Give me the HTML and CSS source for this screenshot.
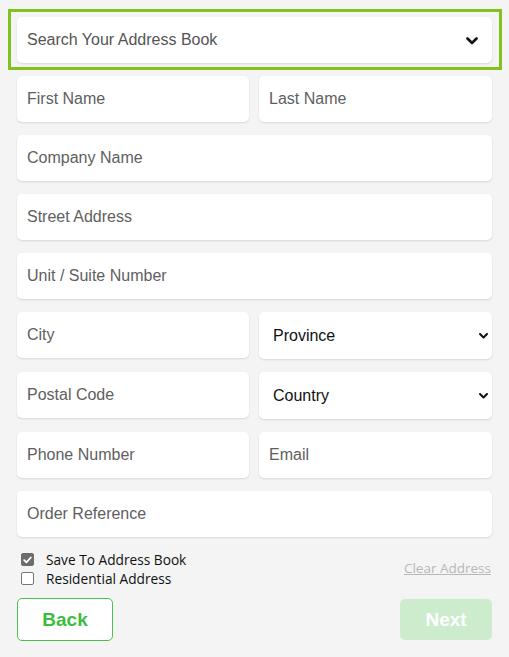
FILE: index.html
```html
<!DOCTYPE html>
<html>
<head>
<meta charset="utf-8">
<link rel="stylesheet" href="styles.css">
</head>
<body>
<div class="page">
  <div class="search-wrap">
    <div class="search-box">
      <span class="search-text">Search Your Address Book</span>
      <svg class="search-chev" width="12" height="8" viewBox="0 0 12 8"><path d="M1.5 1.5 L6 6 L10.5 1.5" fill="none" stroke="#111" stroke-width="2.6" stroke-linecap="round" stroke-linejoin="round"/></svg>
    </div>
  </div>
  <form class="form">
    <div class="row two">
      <input class="field" placeholder="First Name">
      <input class="field" placeholder="Last Name">
    </div>
    <div class="row"><input class="field" placeholder="Company Name"></div>
    <div class="row"><input class="field" placeholder="Street Address"></div>
    <div class="row"><input class="field" placeholder="Unit / Suite Number"></div>
    <div class="row two">
      <input class="field" placeholder="City">
      <div class="select-wrap">
        <select class="select"><option>Province</option></select>
        <svg class="select-chev" width="9" height="6" viewBox="0 0 9 6"><path d="M1 1 L4.5 4.5 L8 1" fill="none" stroke="#111" stroke-width="2" stroke-linecap="round" stroke-linejoin="round"/></svg>
      </div>
    </div>
    <div class="row two">
      <input class="field" placeholder="Postal Code">
      <div class="select-wrap">
        <select class="select"><option>Country</option></select>
        <svg class="select-chev" width="9" height="6" viewBox="0 0 9 6"><path d="M1 1 L4.5 4.5 L8 1" fill="none" stroke="#111" stroke-width="2" stroke-linecap="round" stroke-linejoin="round"/></svg>
      </div>
    </div>
    <div class="row two">
      <input class="field" placeholder="Phone Number">
      <input class="field" placeholder="Email">
    </div>
    <div class="row"><input class="field" placeholder="Order Reference"></div>
    <div class="options">
      <div class="checks">
        <label class="check"><span class="box checked"><svg width="9" height="8" viewBox="0 0 9 8"><path d="M1.2 4.2 L3.4 6.3 L7.8 1.5" fill="none" stroke="#fff" stroke-width="1.8" stroke-linecap="round" stroke-linejoin="round"/></svg></span>Save To Address Book</label>
        <label class="check"><span class="box"></span>Residential Address</label>
      </div>
      <a class="clear">Clear Address</a>
    </div>
    <div class="actions">
      <button type="button" class="btn back">Back</button>
      <button type="button" class="btn next">Next</button>
    </div>
  </form>
</div>
</body>
</html>
```
FILE: styles.css
```css
* { box-sizing: border-box; }
html, body { margin: 0; padding: 0; }
body {
  background: #f4f4f4;
  font-family: "Liberation Sans", Arial, sans-serif;
  width: 509px;
  height: 657px;
  overflow: hidden;
}
.page {
  padding: 9px 7px 0 8px;
}
.search-wrap {
  width: 494px;
  border: 3px solid #7fc31c;
  padding: 5px 7px 4px 6px;
}
.search-box {
  height: 46px;
  background: #fff;
  border-radius: 5px;
  box-shadow: 0 1px 2px rgba(0,0,0,0.12);
  display: flex;
  align-items: center;
  justify-content: space-between;
  padding: 0 14px 0 10px;
}
.search-text {
  font-size: 16px;
  color: #555;
}
.search-chev { display: block; margin-top: 1px; }
.form {
  margin: 6px 0 0 9px;
  width: 475px;
  display: flex;
  flex-direction: column;
  gap: 13px;
}
.row {
  display: grid;
  grid-template-columns: 1fr;
}
.row.two {
  grid-template-columns: 232px 233px;
  column-gap: 10px;
}
.field {
  height: 46px;
  border: none;
  background: #fff;
  border-radius: 5px;
  box-shadow: 0 1px 2px rgba(0,0,0,0.12);
  padding: 0 10px;
  font-family: "Liberation Sans", Arial, sans-serif;
  font-size: 16px;
  color: #222;
  outline: none;
}
.field::placeholder { color: #606060; }
.select-wrap {
  position: relative;
}
.select {
  -webkit-appearance: none;
  appearance: none;
  width: 100%;
  height: 47px;
  border: none;
  background: #fff;
  border-radius: 5px;
  box-shadow: 0 1px 2px rgba(0,0,0,0.12);
  padding: 0 14px;
  font-family: "Liberation Sans", Arial, sans-serif;
  font-size: 16px;
  color: #111;
  outline: none;
}
.select-chev {
  position: absolute;
  right: 4px;
  top: 21px;
  pointer-events: none;
}
.options {
  margin-top: 0;
  display: flex;
  justify-content: space-between;
  align-items: center;
  padding: 0 0 0 4px;
}
.checks {
  display: flex;
  flex-direction: column;
}
.check {
  display: flex;
  align-items: center;
  font-family: "Open Sans", "Noto Sans", sans-serif;
  font-size: 13.7px;
  line-height: 19px;
  color: #111;
}
.box {
  width: 13px;
  height: 13px;
  border: 1px solid #767676;
  border-radius: 2px;
  background: #fff;
  margin-right: 12px;
  display: flex;
  align-items: center;
  justify-content: center;
}
.box.checked {
  background: #6d6d6d;
  border-color: #6d6d6d;
}
.clear {
  font-family: "Open Sans", "Noto Sans", sans-serif;
  font-size: 13.5px;
  color: #b8b8b8;
  text-decoration: underline;
  margin-bottom: 3px;
  margin-right: 1px;
}
.actions {
  margin-top: -3px;
  display: flex;
  justify-content: space-between;
  align-items: center;
}
.btn {
  font-family: "Liberation Sans", Arial, sans-serif;
  font-weight: bold;
  font-size: 19px;
  border-radius: 5px;
  cursor: pointer;
}
.back {
  width: 96px;
  height: 43px;
  background: #fff;
  border: 1px solid #4cc04c;
  color: #3dbd3d;
}
.next {
  width: 92px;
  height: 41px;
  background: #cdeccd;
  border: none;
  color: #fff;
}
```
